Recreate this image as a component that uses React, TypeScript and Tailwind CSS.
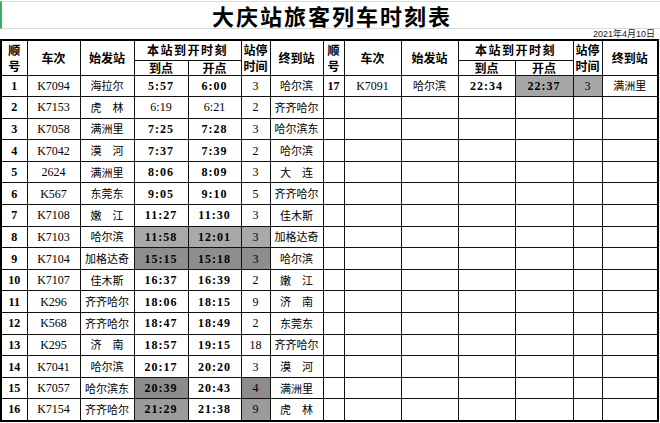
import React from "react";

type Row = {
  no: number;
  train: string;
  from: string;
  arr: string;
  dep: string;
  stop: string;
  to: string;
  thin?: boolean;
  arrBg?: string;
  depBg?: string;
  stopBg?: string;
};

const rows: Row[] = [
  { no: 1, train: "K7094", from: "海拉尔", arr: "5:57", dep: "6:00", stop: "3", to: "哈尔滨" },
  { no: 2, train: "K7153", from: "虎　林", arr: "6:19", dep: "6:21", stop: "2", to: "齐齐哈尔", thin: true },
  { no: 3, train: "K7058", from: "满洲里", arr: "7:25", dep: "7:28", stop: "3", to: "哈尔滨东" },
  { no: 4, train: "K7042", from: "漠　河", arr: "7:37", dep: "7:39", stop: "2", to: "哈尔滨" },
  { no: 5, train: "2624", from: "满洲里", arr: "8:06", dep: "8:09", stop: "3", to: "大　连" },
  { no: 6, train: "K567", from: "东莞东", arr: "9:05", dep: "9:10", stop: "5", to: "齐齐哈尔" },
  { no: 7, train: "K7108", from: "嫩　江", arr: "11:27", dep: "11:30", stop: "3", to: "佳木斯" },
  {
    no: 8, train: "K7103", from: "哈尔滨", arr: "11:58", dep: "12:01", stop: "3", to: "加格达奇",
    arrBg: "bg-[#a9a9a9]", depBg: "bg-[#a9a9a9]", stopBg: "bg-[#a9a9a9]",
  },
  {
    no: 9, train: "K7104", from: "加格达奇", arr: "15:15", dep: "15:18", stop: "3", to: "哈尔滨",
    arrBg: "bg-[#8e8e8e]", depBg: "bg-[#8e8e8e]", stopBg: "bg-[#8e8e8e]",
  },
  { no: 10, train: "K7107", from: "佳木斯", arr: "16:37", dep: "16:39", stop: "2", to: "嫩　江" },
  { no: 11, train: "K296", from: "齐齐哈尔", arr: "18:06", dep: "18:15", stop: "9", to: "济　南" },
  { no: 12, train: "K568", from: "齐齐哈尔", arr: "18:47", dep: "18:49", stop: "2", to: "东莞东" },
  { no: 13, train: "K295", from: "济　南", arr: "18:57", dep: "19:15", stop: "18", to: "齐齐哈尔" },
  { no: 14, train: "K7041", from: "哈尔滨", arr: "20:17", dep: "20:20", stop: "3", to: "漠　河" },
  {
    no: 15, train: "K7057", from: "哈尔滨东", arr: "20:39", dep: "20:43", stop: "4", to: "满洲里",
    arrBg: "bg-[#8c8c8c]", stopBg: "bg-[#8c8c8c]",
  },
  {
    no: 16, train: "K7154", from: "齐齐哈尔", arr: "21:29", dep: "21:38", stop: "9", to: "虎　林",
    arrBg: "bg-[#9b9b9b]", stopBg: "bg-[#9b9b9b]",
  },
];

const extra: Row = {
  no: 17, train: "K7091", from: "哈尔滨", arr: "22:34", dep: "22:37", stop: "3", to: "满洲里",
  depBg: "bg-[#a6a6a6]", stopBg: "bg-[#a6a6a6]",
};

const td = "border border-[#111] p-0 text-center align-middle leading-none whitespace-nowrap";
const th = "border border-[#111] p-0 text-center align-middle font-bold text-[12px] leading-[14px] font-['Noto_Sans_CJK_SC',sans-serif]";
const serif = "font-['Liberation_Serif','Noto_Sans_CJK_SC',serif]";
const cjk = "font-['Noto_Sans_CJK_SC',sans-serif] text-[11px]";

function Cells({ r }: { r?: Row }) {
  if (!r) {
    return (
      <>
        <td className={td} />
        <td className={td} />
        <td className={td} />
        <td className={td} />
        <td className={td} />
        <td className={td} />
        <td className={td} />
      </>
    );
  }
  const time = r.thin ? "font-normal" : "font-bold tracking-[1px]";
  return (
    <>
      <td className={`${td} ${serif} text-[12px] font-bold`}>{r.no}</td>
      <td className={`${td} ${serif} text-[12px]`}>{r.train}</td>
      <td className={`${td} ${cjk}`}>{r.from}</td>
      <td className={`${td} ${serif} text-[12px] ${time} ${r.arrBg ?? ""}`}>{r.arr}</td>
      <td className={`${td} ${serif} text-[12px] ${time} ${r.depBg ?? ""}`}>{r.dep}</td>
      <td className={`${td} ${serif} text-[12px] ${r.stopBg ?? ""}`}>{r.stop}</td>
      <td className={`${td} ${cjk}`}>{r.to}</td>
    </>
  );
}

function Stack({ a, b }: { a: string; b: string }) {
  return (
    <div className="flex flex-col items-center gap-[1px]">
      <span className="block leading-[15px]">{a}</span>
      <span className="block leading-[15px]">{b}</span>
    </div>
  );
}

function HeadGroup() {
  return (
    <>
      <th rowSpan={2} className={th}>
        <Stack a="顺" b="号" />
      </th>
      <th rowSpan={2} className={th}>车次</th>
      <th rowSpan={2} className={th}>始发站</th>
      <th colSpan={2} className={`${th} tracking-[1.5px]`}>本站到开时刻</th>
      <th rowSpan={2} className={th}>
        <Stack a="站停" b="时间" />
      </th>
      <th rowSpan={2} className={th}>终到站</th>
    </>
  );
}

export default function App() {
  return (
    <div className="w-[660px] h-[423px] bg-white overflow-hidden text-black">
      <div className="h-[28px] mt-[1px] border-t border-b border-[#dcdcdc] border-l-2 border-l-[#3daa6e] flex items-center justify-center">
        <h1 className="text-[22px] font-bold tracking-[2px] leading-none font-['Noto_Sans_CJK_SC',sans-serif] pl-[2px]">
          大庆站旅客列车时刻表
        </h1>
      </div>
      <div className="h-[10px] flex items-center justify-end pr-[5px] text-[9px] leading-none font-['Liberation_Sans','Noto_Sans_CJK_SC',sans-serif] text-[#222]">
        2021年4月10日
      </div>
      <table className="table-fixed border-collapse border-2 border-black w-[657px]">
        <colgroup>
          <col className="w-[26px]" />
          <col className="w-[53px]" />
          <col className="w-[54px]" />
          <col className="w-[54px]" />
          <col className="w-[53px]" />
          <col className="w-[29px]" />
          <col className="w-[53px]" />
          <col className="w-[21px]" />
          <col className="w-[57px]" />
          <col className="w-[57px]" />
          <col className="w-[57px]" />
          <col className="w-[58px]" />
          <col className="w-[29px]" />
          <col className="w-[56px]" />
        </colgroup>
        <thead>
          <tr className="h-[20px]">
            <HeadGroup />
            <HeadGroup />
          </tr>
          <tr className="h-[15px]">
            <th className={th}>到点</th>
            <th className={th}>开点</th>
            <th className={th}>到点</th>
            <th className={th}>开点</th>
          </tr>
        </thead>
        <tbody>
          {rows.map((r, i) => (
            <tr key={r.no} className="h-[21.6px]">
              <Cells r={r} />
              <Cells r={i === 0 ? extra : undefined} />
            </tr>
          ))}
        </tbody>
      </table>
    </div>
  );
}
